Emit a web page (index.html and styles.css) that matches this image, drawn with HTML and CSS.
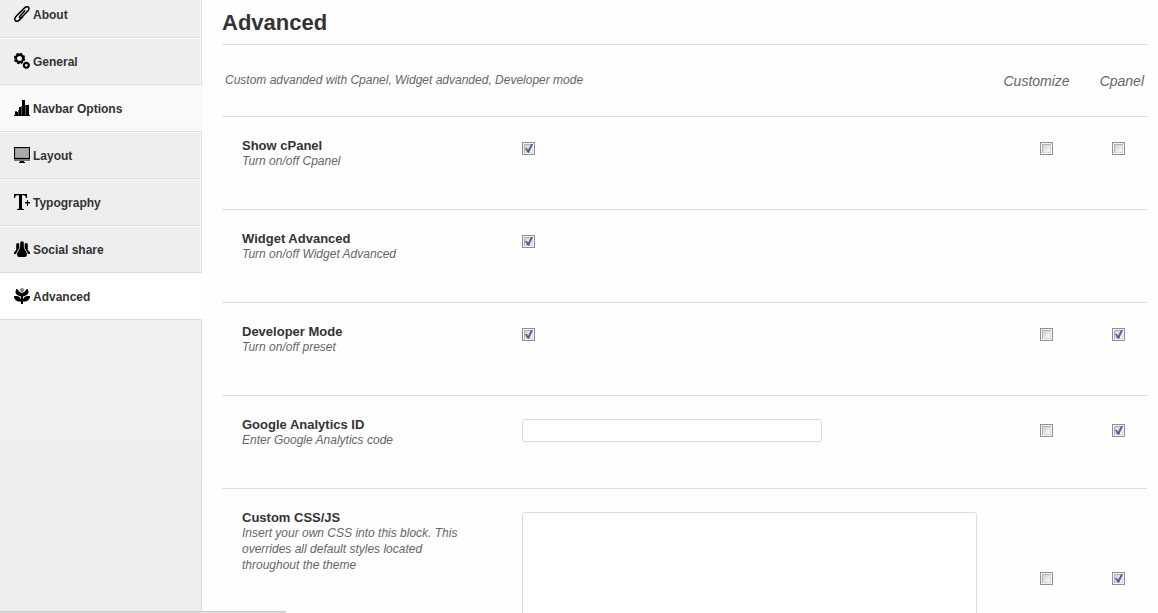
FILE: index.html
```html
<!DOCTYPE html>
<html lang="en">
<head>
<meta charset="utf-8">
<title>Advanced</title>
<link rel="stylesheet" href="styles.css">
</head>
<body>
<div class="layout">
  <aside class="sidebar">
    <nav class="menu">
      <a class="menu-item" href="#about">
        <svg class="icon" viewBox="0 0 16 16" fill="none" stroke="#000" stroke-width="1.5" stroke-linecap="round"><path d="M10.800 4.800 5.800 10.200c-1 1.100.6 2.300 1.700 1.200L13.600 5.200c1.900-2 1.600-3.300.8-4-.9-.8-2.400-.7-3.800.7L2.600 9.800c-2.200 2.300-2.300 3.800-1.200 4.800 1.100 1 2.700.7 4.400-1l3-3"/></svg>
        <span>About</span>
      </a>
      <a class="menu-item" href="#general">
        <svg class="icon" viewBox="0 0 16 16" fill="none" stroke="#000"><circle cx="5.500" cy="5.500" r="3.700" stroke-width="2.400"/><circle cx="5.500" cy="5.500" r="4.900" stroke-width="1.600" stroke-dasharray="2.200 1.648"/><circle cx="12.300" cy="12.300" r="2.300" stroke-width="1.900"/><circle cx="12.300" cy="12.300" r="3.200" stroke-width="1" stroke-dasharray="1.400 1.113"/></svg>
        <span>General</span>
      </a>
      <a class="menu-item menu-item-hover" href="#navbar">
        <svg class="icon" viewBox="0 0 16 16"><path fill="#000" d="M0 15h16v1H0zM1 12h3v3H1zM5 7h2v8H5zM8 0h3v15H8zM12 5h3v10h-3z"/><path fill="#555" d="M4 10h1v5H4zM7 6h1v9H7zM11 5h1v10h-1zM1 11h2v1H1z"/></svg>
        <span>Navbar Options</span>
      </a>
      <a class="menu-item" href="#layout">
        <svg class="icon" viewBox="0 0 16 16"><path fill="#000" d="M0 0h16v12H0z"/><path fill="#999" d="M1 1h14v10H1z"/><path fill="#aaa" d="M2 2h12v8H2z"/><path fill="#777" d="M0 12h16v2H0z"/><path fill="#000" d="M6 14h4v1h1v1H5v-1h1z"/></svg>
        <span>Layout</span>
      </a>
      <a class="menu-item" href="#typography">
        <svg class="icon" viewBox="0 0 16 16"><path fill="#000" d="M0 0h13v4h-1c-.3-2-1-2.800-2-2.800H8V14c0 .7.500 1 2 1v1H3v-1c1.500 0 2-.3 2-1V1.200H3C2 1.200 1.300 2 1 4H0zM13 6h1v2h2v1.500h-2V12h-1V9.500h-2V8h2z"/></svg>
        <span>Typography</span>
      </a>
      <a class="menu-item" href="#social">
        <svg class="icon" viewBox="0 0 16 16"><path fill="#000" d="M6.200 1.500Q8-1.200 9.800 1.500V6l.9 2.500L12.800 12v2.500q-.5 1.500-2 1.500H5.200q-1.500 0-2-1.500V12l2.100-3.500.9-2.500z"/><path fill="#000" d="M2.200 3q1.600-2 3.100 0v4L3 10.800 2 13H0v-1.800L2.200 9zM13.800 3q-1.600-2-3.100 0v4l2.300 3.800 1 2.200h2v-1.800L13.800 9z"/></svg>
        <span>Social share</span>
      </a>
      <a class="menu-item menu-item-active" href="#advanced" aria-current="page">
        <svg class="icon" viewBox="0 0 16 16"><path fill="#888" d="M8 0 9.500.5 10.500 2 9.500 3.500 8 4.200 6.500 3.500 5.500 2 6.500.5z"/><path fill="#000" d="M2.300 1 4 1.500 5 3.500 8 5l3-1.500 1-2 1.700-.5 1 3.500L13 7 9 8.500V11q1.500-2.800 4-3h3v1.500q-1.500 4-5 4l-2 .3V16H7v-2.200l-2-.3q-3.500 0-5-4V8h3q2.500.2 4 3V8.500L3 7 1.300 4.500z"/></svg>
        <span>Advanced</span>
      </a>
    </nav>
  </aside>
  <main class="content">
    <h1 class="title">Advanced</h1>
    <form class="settings">
      <div class="intro">
        <p class="intro-text">Custom advanded with Cpanel, Widget advanded, Developer mode</p>
        <div class="headings"><span>Customize</span><span>Cpanel</span></div>
      </div>
      <div class="row">
        <div class="info">
          <label class="name" for="show-cpanel">Show cPanel</label>
          <p class="hint">Turn on/off Cpanel</p>
        </div>
        <div class="controls">
          <input class="check" type="checkbox" id="show-cpanel" checked>
          <div class="flags">
            <input class="check" type="checkbox" aria-label="Show cPanel: Customize">
            <input class="check" type="checkbox" aria-label="Show cPanel: Cpanel">
          </div>
        </div>
      </div>
      <div class="row">
        <div class="info">
          <label class="name" for="widget-advanced">Widget Advanced</label>
          <p class="hint">Turn on/off Widget Advanced</p>
        </div>
        <div class="controls">
          <input class="check" type="checkbox" id="widget-advanced" checked>
        </div>
      </div>
      <div class="row">
        <div class="info">
          <label class="name" for="developer-mode">Developer Mode</label>
          <p class="hint">Turn on/off preset</p>
        </div>
        <div class="controls">
          <input class="check" type="checkbox" id="developer-mode" checked>
          <div class="flags">
            <input class="check" type="checkbox" aria-label="Developer Mode: Customize">
            <input class="check" type="checkbox" aria-label="Developer Mode: Cpanel" checked>
          </div>
        </div>
      </div>
      <div class="row">
        <div class="info">
          <label class="name" for="analytics">Google Analytics ID</label>
          <p class="hint">Enter Google Analytics code</p>
        </div>
        <div class="controls">
          <input class="field" type="text" id="analytics">
          <div class="flags">
            <input class="check" type="checkbox" aria-label="Google Analytics ID: Customize">
            <input class="check" type="checkbox" aria-label="Google Analytics ID: Cpanel" checked>
          </div>
        </div>
      </div>
      <div class="row">
        <div class="info">
          <label class="name" for="custom-code">Custom CSS/JS</label>
          <p class="hint">Insert your own CSS into this block. This overrides all default styles located throughout the theme</p>
        </div>
        <div class="controls">
          <textarea class="field field-area" id="custom-code"></textarea>
          <div class="flags">
            <input class="check" type="checkbox" aria-label="Custom CSS/JS: Customize">
            <input class="check" type="checkbox" aria-label="Custom CSS/JS: Cpanel" checked>
          </div>
        </div>
      </div>
    </form>
  </main>
</div>
<div class="status-edge"></div>
</body>
</html>
```
FILE: styles.css
```css
* {
  box-sizing: border-box;
}

body {
  margin: 0;
  height: 100vh;
  overflow: hidden;
  background: #fefefe;
  color: #333;
  font-family: "Liberation Sans", Arial, sans-serif;
  font-size: 12px;
}

p,
h1 {
  margin: 0;
}

.layout {
  display: flex;
  min-height: 100vh;
}

.sidebar {
  flex: 0 0 202px;
  height: 100vh;
  background: linear-gradient(#f5f5f5, #f1f1f1 52%, #ededed);
  border-right: 1px solid #ddd;
}

.menu {
  margin: -9px -1px 0 0;
}

.menu-item {
  display: flex;
  align-items: center;
  gap: 3px;
  height: 47px;
  padding-left: 14px;
  background: #eee;
  border-bottom: 1px solid #ddd;
  border-right: 1px solid #ddd;
  box-shadow: inset -1px 1px #f9f9f9;
  color: #333;
  font-weight: bold;
  line-height: 14px;
  text-decoration: none;
}

.menu-item span {
  padding-top: 2px;
}

.menu-item-hover {
  background: #f9f9f9;
  border-right-color: #f9f9f9;
}

.menu-item-active {
  background: #fff;
  border-right-color: #fff;
  box-shadow: none;
}

.icon {
  width: 16px;
  height: 16px;
}

.content {
  flex: 1;
  min-width: 0;
  padding: 0 11px 0 20px;
}

.title {
  height: 45px;
  border-bottom: 1px solid #ddd;
  font-size: 22px;
  line-height: 46px;
}

.intro {
  display: flex;
  justify-content: space-between;
  height: 72px;
  padding: 0 3px;
  border-bottom: 1px solid #ddd;
  color: #666;
  font-style: italic;
  line-height: 70px;
}

.headings {
  display: flex;
  gap: 30px;
  font-size: 14px;
  line-height: 72px;
}

.row {
  display: flex;
  min-height: 93px;
  padding: 21px 22px 23px 20px;
  border-bottom: 1px solid #ddd;
}

.info {
  flex: 0 0 280px;
  padding-right: 56px;
}

.name {
  display: block;
  font-size: 13px;
  font-weight: bold;
  line-height: 15px;
}

.hint {
  color: #666;
  font-style: italic;
  line-height: 16px;
}

.controls {
  flex: 1;
  display: flex;
  align-items: center;
  align-self: flex-start;
  min-height: 17px;
  margin-top: 2px;
}

.flags {
  display: flex;
  gap: 59px;
  margin-left: auto;
}

.field {
  width: 300px;
  height: 23px;
  padding: 3px 6px;
  background: #fff;
  border: 1px solid #ddd;
  border-radius: 3px;
  font: inherit;
}

.field-area {
  width: 455px;
  height: 133px;
  resize: none;
}

.check {
  appearance: none;
  position: relative;
  width: 13px;
  height: 13px;
  margin: 0;
  padding: 1px;
  border: 1px solid #8e8f8f;
  background:
    linear-gradient(135deg, #cbcfd5 10%, #f6f6f6 80%) content-box,
    #f4f4f4;
  box-shadow: inset 0 0 0 1px #f4f4f4, inset 1px 1px 0 1px #aeb3b9, inset -1px -1px 0 1px #d5d7da;
}

.check:checked::after {
  content: "";
  position: absolute;
  inset: -1px;
  background: #4b5f9d;
  clip-path: polygon(3px 6px, 5px 6px, 6px 8px, 9px 2px, 11px 2px, 7px 11px, 5px 10px);
}

.status-edge {
  position: fixed;
  bottom: 0;
  left: 0;
  width: 286px;
  height: 2px;
  background: #ddd;
  border-top: 1px solid #c9c9c9;
  border-top-right-radius: 2px;
}
```
